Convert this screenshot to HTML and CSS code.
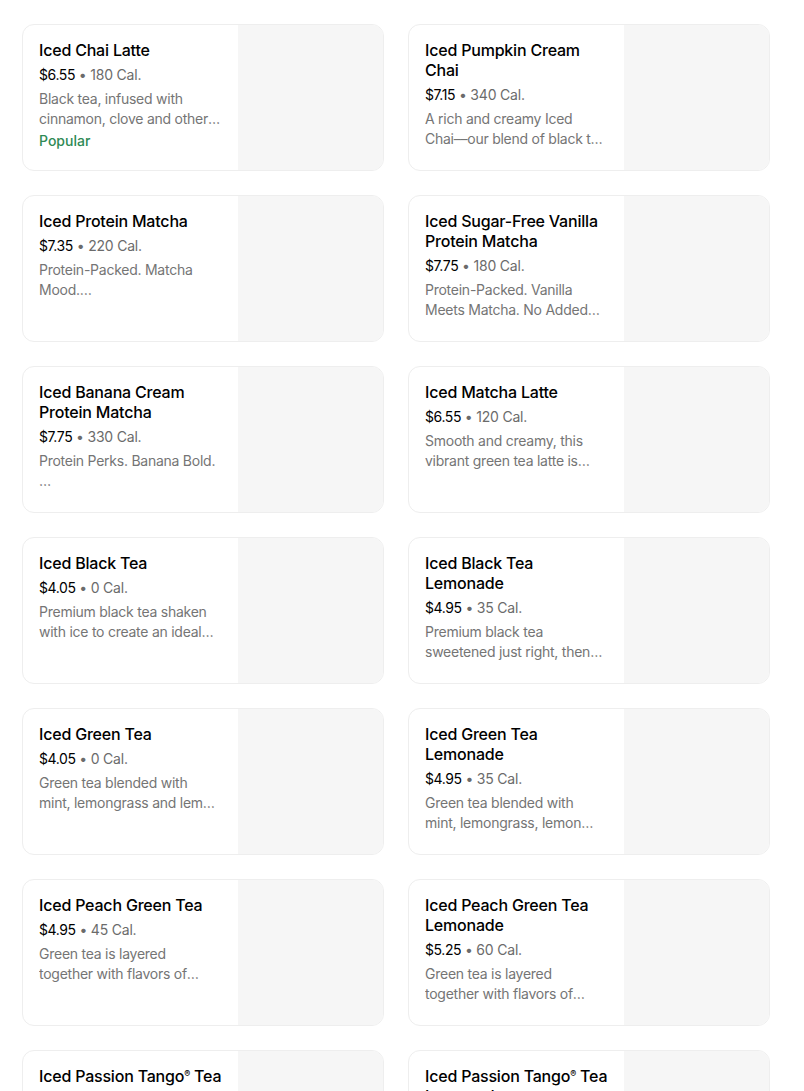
FILE: index.html
```html
<!DOCTYPE html>
<html lang="en">
<head>
<meta charset="utf-8">
<title>Menu</title>
<link rel="stylesheet" href="styles.css">
</head>
<body>
<main class="menu">
  <ul class="grid">
    <li class="card">
      <div class="info">
        <h3 class="title">Iced Chai Latte</h3>
        <div class="meta"><span class="price">$6.55</span> • 180 Cal.</div>
        <p class="desc">Black tea, infused with cinnamon, clove and other warming spices, is combined with milk and ice.</p>
        <div class="tag">Popular</div>
      </div>
      <div class="thumb"></div>
    </li>
    <li class="card">
      <div class="info">
        <h3 class="title">Iced Pumpkin Cream Chai</h3>
        <div class="meta"><span class="price">$7.15</span> • 340 Cal.</div>
        <p class="desc">A rich and creamy Iced Chai––our blend of black tea infused with cinnamon, clove and other warming spices.</p>
      </div>
      <div class="thumb"></div>
    </li>
    <li class="card">
      <div class="info">
        <h3 class="title">Iced Protein Matcha</h3>
        <div class="meta"><span class="price">$7.35</span> • 220 Cal.</div>
        <p class="desc">Protein-Packed. Matcha Mood.
Smooth and creamy matcha sweetened just right.</p>
      </div>
      <div class="thumb"></div>
    </li>
    <li class="card">
      <div class="info">
        <h3 class="title">Iced Sugar-Free Vanilla Protein Matcha</h3>
        <div class="meta"><span class="price">$7.75</span> • 180 Cal.</div>
        <p class="desc">Protein-Packed. Vanilla Meets Matcha. No Added Sugar.</p>
      </div>
      <div class="thumb"></div>
    </li>
    <li class="card">
      <div class="info">
        <h3 class="title">Iced Banana Cream Protein Matcha</h3>
        <div class="meta"><span class="price">$7.75</span> • 330 Cal.</div>
        <p class="desc">Protein Perks. Banana Bold.

Smooth matcha with banana cream.</p>
      </div>
      <div class="thumb"></div>
    </li>
    <li class="card">
      <div class="info">
        <h3 class="title">Iced Matcha Latte</h3>
        <div class="meta"><span class="price">$6.55</span> • 120 Cal.</div>
        <p class="desc">Smooth and creamy, this vibrant green tea latte is served over ice.</p>
      </div>
      <div class="thumb"></div>
    </li>
    <li class="card">
      <div class="info">
        <h3 class="title">Iced Black Tea</h3>
        <div class="meta"><span class="price">$4.05</span> • 0 Cal.</div>
        <p class="desc">Premium black tea shaken with ice to create an ideal iced tea.</p>
      </div>
      <div class="thumb"></div>
    </li>
    <li class="card">
      <div class="info">
        <h3 class="title">Iced Black Tea Lemonade</h3>
        <div class="meta"><span class="price">$4.95</span> • 35 Cal.</div>
        <p class="desc">Premium black tea sweetened just right, then shaken with lemonade.</p>
      </div>
      <div class="thumb"></div>
    </li>
    <li class="card">
      <div class="info">
        <h3 class="title">Iced Green Tea</h3>
        <div class="meta"><span class="price">$4.05</span> • 0 Cal.</div>
        <p class="desc">Green tea blended with mint, lemongrass and lemon verbena.</p>
      </div>
      <div class="thumb"></div>
    </li>
    <li class="card">
      <div class="info">
        <h3 class="title">Iced Green Tea Lemonade</h3>
        <div class="meta"><span class="price">$4.95</span> • 35 Cal.</div>
        <p class="desc">Green tea blended with mint, lemongrass, lemon verbena and lemonade.</p>
      </div>
      <div class="thumb"></div>
    </li>
    <li class="card">
      <div class="info">
        <h3 class="title">Iced Peach Green Tea</h3>
        <div class="meta"><span class="price">$4.95</span> • 45 Cal.</div>
        <p class="desc">Green tea is layered together with flavors of peach and shaken with ice.</p>
      </div>
      <div class="thumb"></div>
    </li>
    <li class="card">
      <div class="info">
        <h3 class="title">Iced Peach Green Tea Lemonade</h3>
        <div class="meta"><span class="price">$5.25</span> • 60 Cal.</div>
        <p class="desc">Green tea is layered together with flavors of peach and lemonade.</p>
      </div>
      <div class="thumb"></div>
    </li>
    <li class="card">
      <div class="info">
        <h3 class="title">Iced Passion Tango<span class="reg">®</span> Tea</h3>
        <div class="meta"><span class="price">$4.05</span> • 0 Cal.</div>
        <p class="desc">A blend of hibiscus, lemongrass and apple shaken with ice.</p>
      </div>
      <div class="thumb"></div>
    </li>
    <li class="card">
      <div class="info">
        <h3 class="title">Iced Passion Tango<span class="reg">®</span> Tea Lemonade</h3>
        <div class="meta"><span class="price">$4.95</span> • 35 Cal.</div>
        <p class="desc">A blend of hibiscus, lemongrass and apple shaken with lemonade.</p>
      </div>
      <div class="thumb"></div>
    </li>
  </ul>
</main>
</body>
</html>
```

FILE: styles.css
```css
* { box-sizing: border-box; }
html, body { margin: 0; padding: 0; background: #ffffff; }
body {
  font-family: Inter, "Noto Sans", "Liberation Sans", sans-serif;
  color: #000000;
}
.menu {
  padding: 24px 33px 0 22px;
}
.grid {
  list-style: none;
  margin: 0;
  padding: 0;
  display: grid;
  grid-template-columns: 362px 362px;
  column-gap: 24px;
  row-gap: 24px;
}
.card {
  display: flex;
  height: 147px;
  border: 1px solid #eeeeee;
  border-radius: 12px;
  overflow: hidden;
  background: #ffffff;
}
.info {
  flex: 1;
  min-width: 0;
  padding: 15px 14px 0 16px;
}
.thumb {
  width: 145px;
  flex: none;
  background: #f6f6f6;
}
.title {
  margin: 0;
  font-size: 16px;
  line-height: 20px;
  font-weight: 500;
  color: #000000;
  letter-spacing: -0.2px;
}
.reg {
  font-size: 9px;
  vertical-align: 5px;
  line-height: 0;
}
.meta {
  margin-top: 5px;
  font-size: 14px;
  line-height: 20px;
  color: #6b6b6b;
  letter-spacing: -0.2px;
}
.price {
  color: #000000;
  letter-spacing: -0.4px;
}
.desc {
  margin: 4px 3px 0 0;
  font-size: 14px;
  line-height: 20px;
  color: #757575;
  letter-spacing: -0.25px;
  white-space: pre-line;
  display: -webkit-box;
  -webkit-line-clamp: 2;
  -webkit-box-orient: vertical;
  overflow: hidden;
}
.tag {
  margin-top: 2px;
  font-size: 14px;
  line-height: 20px;
  font-weight: 500;
  color: #2f8a55;
}
```
